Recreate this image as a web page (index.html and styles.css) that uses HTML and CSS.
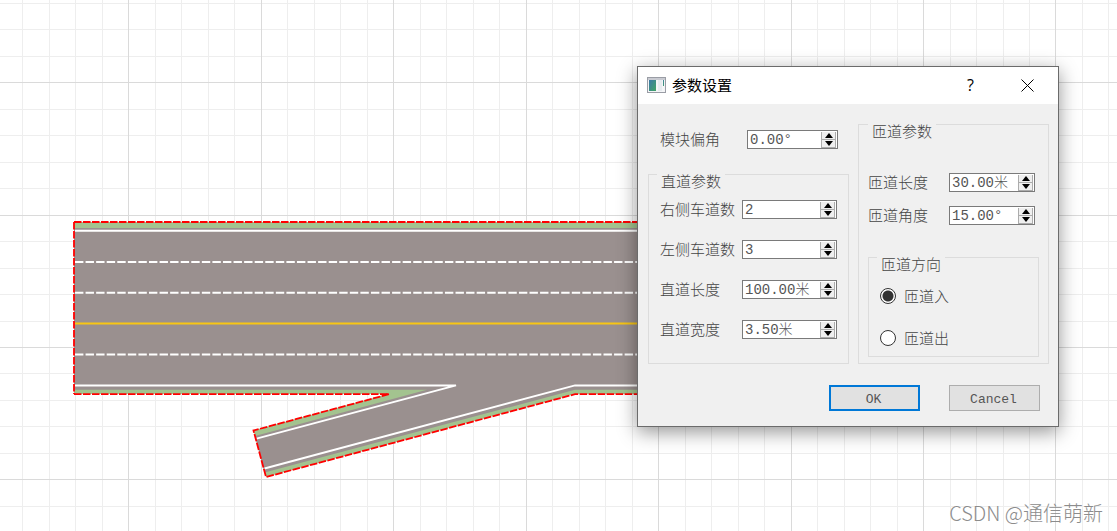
FILE: index.html
```html
<!DOCTYPE html>
<html lang="zh-CN">
<head>
<meta charset="utf-8">
<meta name="viewport" content="width=device-width, initial-scale=1">
<title>参数设置</title>
<link rel="stylesheet" href="styles.css">
</head>
<body>
<main class="stage">
  <svg class="scene" aria-hidden="true">
    <g class="grid">
      <path class="minor" d="M22.500 0v2000M49.500 0v2000M75.500 0v2000M102.500 0v2000M155.500 0v2000M181.500 0v2000M208.500 0v2000M234.500 0v2000M287.500 0v2000M314.500 0v2000M340.500 0v2000M367.500 0v2000M420.500 0v2000M446.500 0v2000M473.500 0v2000M499.500 0v2000M552.500 0v2000M579.500 0v2000M605.500 0v2000M632.500 0v2000M685.500 0v2000M711.500 0v2000M738.500 0v2000M764.500 0v2000M817.500 0v2000M844.500 0v2000M870.500 0v2000M897.500 0v2000M950.500 0v2000M976.500 0v2000M1003.500 0v2000M1029.500 0v2000M1082.500 0v2000M1108.500 0v2000"/>
      <path class="minor" d="M0 3.500h3000M0 29.500h3000M0 56.500h3000M0 109.500h3000M0 135.500h3000M0 162.500h3000M0 188.500h3000M0 241.500h3000M0 268.500h3000M0 294.500h3000M0 321.500h3000M0 373.500h3000M0 400.500h3000M0 426.500h3000M0 453.500h3000M0 506.500h3000"/>
      <path class="major" d="M128.500 0v2000M261.500 0v2000M393.500 0v2000M526.500 0v2000M658.500 0v2000M791.500 0v2000M923.500 0v2000M1055.500 0v2000M0 82.500h3000M0 215.500h3000M0 347.500h3000M0 479.500h3000"/>
    </g>
    <path class="verge" d="M74 222H900V394H575L266 477L253.500 430.500L388 394H74Z"/>
    <path class="asphalt" d="M74 228H900V389.800H575L264.600 472.500L255 436L427 389.800H74Z"/>
    <path class="edge" d="M75 230.800H900M75 385.400H456L256.500 438.600M900 385.400H575L264.500 468.500"/>
    <path class="lane" d="M75 262H900M75 292.800H900M75 354.500H900"/>
    <path class="centre" d="M75 323.500H900"/>
    <path class="outline" d="M74 222H900M74 222V394M74 394.200H389L253.500 430.500L266 477L575 394.200H900"/>
  </svg>

  <section class="dialog" role="dialog" aria-labelledby="dialog-title">
    <header class="titlebar">
      <svg class="app-icon" viewBox="0 0 19 16" aria-hidden="true">
        <defs>
          <linearGradient id="pane" x1="0" y1="0" x2="1" y2="1"><stop offset="0" stop-color="#3c78a8"/><stop offset="1" stop-color="#3fa565"/></linearGradient>
        </defs>
        <path fill="#9a9da5" d="M0 0h19v16H0z"/>
        <path fill="#c9cbd2" d="M1 1h17v2H1z"/>
        <path fill="#f4f5f7" d="M1 3h17v12H1z"/>
        <path fill="url(#pane)" d="M2 3h7v11H2z"/>
        <path fill="#e6ebef" d="M11 3h4v11h-4z"/>
        <path fill="url(#pane)" d="M16 3h1v6h-1z"/>
      </svg>
      <h1 id="dialog-title" class="title">参数设置</h1>
      <button class="tool" type="button" aria-label="帮助">?</button>
      <button class="tool" type="button" aria-label="关闭"><svg class="close" viewBox="0 0 13 13" aria-hidden="true"><path d="M.5.5l12 12M12.500.5l-12 12"/></svg></button>
    </header>

    <form class="body">
      <div class="columns">
        <div class="left">
          <div class="row offset">
            <label for="offset">模块偏角</label>
            <span class="spin"><input id="offset" type="text" value="0.00°"><span class="steps"><button type="button" class="up" aria-label="增加"></button><button type="button" class="down" aria-label="减少"></button></span></span>
          </div>
          <fieldset class="group straight">
            <legend>直道参数</legend>
            <div class="rows">
              <div class="row"><label for="right-lanes">右侧车道数</label>
                <span class="spin"><input id="right-lanes" type="text" value="2"><span class="steps"><button type="button" class="up" aria-label="增加"></button><button type="button" class="down" aria-label="减少"></button></span></span></div>
              <div class="row"><label for="left-lanes">左侧车道数</label>
                <span class="spin"><input id="left-lanes" type="text" value="3"><span class="steps"><button type="button" class="up" aria-label="增加"></button><button type="button" class="down" aria-label="减少"></button></span></span></div>
              <div class="row"><label for="length">直道长度</label>
                <span class="spin"><input id="length" type="text" value="100.00米"><span class="steps"><button type="button" class="up" aria-label="增加"></button><button type="button" class="down" aria-label="减少"></button></span></span></div>
              <div class="row"><label for="width">直道宽度</label>
                <span class="spin"><input id="width" type="text" value="3.50米"><span class="steps"><button type="button" class="up" aria-label="增加"></button><button type="button" class="down" aria-label="减少"></button></span></span></div>
            </div>
          </fieldset>
        </div>

        <fieldset class="group ramp">
          <legend>匝道参数</legend>
          <div class="rows">
            <div class="row"><label for="ramp-length">匝道长度</label>
              <span class="spin"><input id="ramp-length" type="text" value="30.00米"><span class="steps"><button type="button" class="up" aria-label="增加"></button><button type="button" class="down" aria-label="减少"></button></span></span></div>
            <div class="row"><label for="ramp-angle">匝道角度</label>
              <span class="spin"><input id="ramp-angle" type="text" value="15.00°"><span class="steps"><button type="button" class="up" aria-label="增加"></button><button type="button" class="down" aria-label="减少"></button></span></span></div>
          </div>
          <fieldset class="group direction">
            <legend>匝道方向</legend>
            <div class="choices">
              <label class="choice"><input type="radio" name="direction" checked>匝道入</label>
              <label class="choice"><input type="radio" name="direction">匝道出</label>
            </div>
          </fieldset>
        </fieldset>
      </div>

      <div class="actions">
        <button class="btn primary" type="button">OK</button>
        <button class="btn" type="button">Cancel</button>
      </div>
    </form>
  </section>

  <p class="credit">CSDN @通信萌新</p>
</main>
</body>
</html>
```
FILE: styles.css
```css
* { box-sizing: border-box; }

body {
  margin: 0;
  background: #fff;
  color: #444;
  font: 300 15px/16px "Noto Sans CJK SC", sans-serif;
}

.stage {
  position: relative;
  min-height: 100vh;
  overflow: hidden;
}

/* Canvas drawing */
.scene {
  position: absolute;
  inset: 0;
  width: 100%;
  height: 100%;
}
.scene path { fill: none; }
.grid { shape-rendering: crispEdges; }
.scene .minor { stroke: #eee; }
.scene .major { stroke: #dadada; }
.scene .verge { fill: #a3c38f; }
.scene .asphalt { fill: #9a908f; }
.edge, .lane { stroke: #fff; stroke-width: 2; }
.lane { stroke-dasharray: 8.4 2.170; }
.centre { stroke: #f8c614; stroke-width: 1.8; }
.outline { stroke: #f00; stroke-width: 1.8; stroke-dasharray: 7.500 1.500; }

/* Dialog window */
.dialog {
  position: absolute;
  left: 637px;
  top: 66px;
  width: 422px;
  border: 1px solid #6b6b6b;
  background: #f0f0f0;
  box-shadow: 0 5px 18px rgba(0, 0, 0, .42);
}
.titlebar {
  display: flex;
  align-items: center;
  height: 37px;
  padding: 0 2px 1px 9px;
  background: #fff;
  color: #000;
}
.app-icon { width: 19px; height: 16px; }
.title {
  flex: 1;
  margin: 0 0 0 6px;
  font-size: 15px;
  font-weight: 400;
}
.tool {
  display: grid;
  place-items: center;
  width: 57px;
  height: 36px;
  padding: 0;
  border: 0;
  background: none;
  color: #000;
  font: 16px/16px "Open Sans", sans-serif;
}
.close { width: 13px; height: 13px; fill: none; stroke: #000; }

.body { padding: 20px 9px 15px 10px; }
.columns {
  display: grid;
  grid-template-columns: 201fr 191fr;
  gap: 9px;
}
.left { display: flex; flex-direction: column; }

.group {
  min-width: 0;
  margin: 0;
  padding: 0;
  border: 1px solid #dcdcdc;
}
.group > legend {
  float: left;
  margin: -1px 0 0 8px;
  padding: 0 4px;
  background: #f0f0f0;
  line-height: 14px;
}
.rows, .choices { clear: both; display: flex; flex-direction: column; }

.row {
  display: flex;
  justify-content: space-between;
  align-items: center;
  height: 19px;
}
.row label { padding-bottom: 2px; }
.offset { margin: 6px 11px 25px 12px; }
.offset .spin { width: 91px; }

.straight { flex: 1; }
.straight .rows { gap: 21px; padding: 12px 11px 24px; }
.straight .spin { width: 95px; }

.ramp { padding: 0 9px 6px; }
.ramp > legend { margin-left: 0; }
.ramp .rows { gap: 14px; padding: 35px 4px 32px 0; }
.ramp .spin { width: 86px; }
.direction .choices { gap: 26px; padding: 17px 10px 10px 11px; }

.spin {
  display: flex;
  height: 19px;
  border: 1px solid #7a7a7a;
  background: #fff;
}
.spin input {
  flex: 1;
  min-width: 0;
  padding: 0 0 0 2px;
  border: 0;
  outline: 0;
  background: none;
  color: #555;
  font: 300 14px/16px "Liberation Mono", "Noto Sans CJK SC", monospace;
}
.steps {
  display: flex;
  flex-direction: column;
  width: 16px;
  padding: 1px 1px 0 0;
}
.steps button {
  display: grid;
  place-items: center;
  flex: 1;
  padding: 0;
  border: 1px solid #acacac;
  border-top: 0;
  background: #efefef;
}
.steps button::before {
  content: "";
  border: 0 solid transparent;
  border-width: 0 4px;
}
.steps .up::before { border-bottom: 5px solid #000; }
.steps .down::before { border-top: 5px solid #000; }

.choice {
  display: flex;
  align-items: center;
  gap: 8px;
}
.choice input {
  appearance: none;
  width: 16px;
  height: 16px;
  margin: 0;
  border: 1px solid #333;
  border-radius: 50%;
  background: #fff;
}
.choice input:checked {
  background: radial-gradient(circle, #333 0 5px, #fff 6px);
}

.actions {
  display: flex;
  justify-content: flex-end;
  gap: 29px;
  margin-top: 21px;
  padding-right: 9px;
}
.btn {
  width: 91px;
  height: 26px;
  padding: 3px 2px 0 0;
  border: 1px solid #adadad;
  background: #e1e1e1;
  color: #555;
  font: 13px/16px "Liberation Mono", monospace;
}
.primary { border: 2px solid #0078d7; }

.credit {
  position: absolute;
  right: 14px;
  bottom: 6px;
  margin: 0;
  color: #8c8c8c;
  font-size: 20px;
  line-height: 24px;
}
```
